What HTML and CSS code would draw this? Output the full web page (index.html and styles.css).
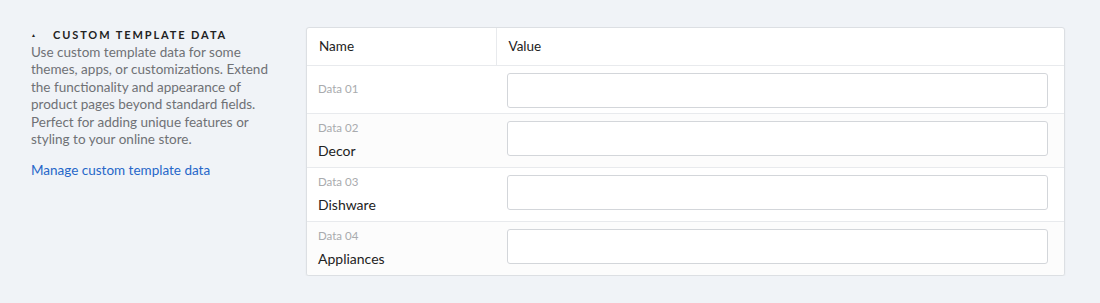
FILE: index.html
```html
<!DOCTYPE html>
<html lang="en">
<head>
    <meta charset="UTF-8">
    <title>Custom Template Data</title>
    <link rel="stylesheet" href="styles.css">
</head>
<body>
    <div class="section">
        <!-- Описание -->
        <div class="section-info">
            <h3 class="section-title"><span class="caret">&#9650;</span>Custom Template Data</h3>
            <p class="section-text">Use custom template data for some themes, apps, or customizations. Extend the functionality and appearance of product pages beyond standard fields. Perfect for adding unique features or styling to your online store.</p>
            <a href="#" class="section-link">Manage custom template data</a>
        </div>

        <!-- Таблица -->
        <div class="data-card">
            <table class="data-table">
                <thead>
                    <tr>
                        <th class="col-name">Name</th>
                        <th class="col-value">Value</th>
                    </tr>
                </thead>
                <tbody>
                    <tr>
                        <td class="cell-name"><span class="data-key">Data 01</span></td>
                        <td class="cell-value"><input type="text" class="data-input"></td>
                    </tr>
                    <tr class="alt">
                        <td class="cell-name"><span class="data-key">Data 02</span><span class="data-label">Decor</span></td>
                        <td class="cell-value"><input type="text" class="data-input"></td>
                    </tr>
                    <tr>
                        <td class="cell-name"><span class="data-key">Data 03</span><span class="data-label">Dishware</span></td>
                        <td class="cell-value"><input type="text" class="data-input"></td>
                    </tr>
                    <tr class="alt">
                        <td class="cell-name"><span class="data-key">Data 04</span><span class="data-label">Appliances</span></td>
                        <td class="cell-value"><input type="text" class="data-input"></td>
                    </tr>
                </tbody>
            </table>
        </div>
    </div>
</body>
</html>
```

FILE: styles.css
```css
/* Переменные */
:root {
    --bg-color: #f0f3f7;
    --card-bg: #ffffff;
    --alt-bg: #fcfcfc;
    --border-color: #dcdfe3;
    --line-color: #e8eaed;
    --text-color: #222222;
    --text-muted: #6f7175;
    --text-light: #a9abae;
    --link-color: #2667c9;
}

* {
    margin: 0;
    padding: 0;
    box-sizing: border-box;
}

body {
    font-family: 'Lato', 'Liberation Sans', sans-serif;
    background-color: var(--bg-color);
    color: var(--text-color);
    font-size: 13.5px;
}

.section {
    display: flex;
    align-items: flex-start;
    gap: 30px;
    padding: 27px 35px 0 31px;
}

/* Описание */
.section-info {
    width: 245px;
    flex-shrink: 0;
}

.section-title {
    font-size: 11px;
    font-weight: 700;
    letter-spacing: 1.9px;
    text-transform: uppercase;
    line-height: 15px;
    color: var(--text-color);
}

.caret {
    display: inline-block;
    font-size: 5px;
    vertical-align: middle;
    margin-right: 17px;
    letter-spacing: 0;
    position: relative;
    top: -1px;
}

.section-text {
    font-size: 13.5px;
    line-height: 17.5px;
    color: var(--text-muted);
    margin-bottom: 13px;
}

.section-link {
    color: var(--link-color);
    text-decoration: none;
    line-height: 17px;
}

.section-link:hover {
    text-decoration: underline;
}

/* Таблица */
.data-card {
    flex: 1;
    background-color: var(--card-bg);
    border: 1px solid var(--border-color);
    border-radius: 3px;
    box-shadow: 0 1px 2px rgba(0, 0, 0, 0.06);
    overflow: hidden;
}

.data-table {
    width: 100%;
    border-collapse: collapse;
}

.data-table th {
    text-align: left;
    font-weight: 400;
    font-size: 13.5px;
    height: 37px;
    padding: 0 12px;
    border-bottom: 1px solid var(--line-color);
}

.col-name {
    width: 189px;
    border-right: 1px solid var(--line-color);
}

.data-table tbody tr {
    border-bottom: 1px solid var(--line-color);
}

.data-table tbody tr:last-child {
    border-bottom: none;
}

.data-table tr.alt {
    background-color: var(--alt-bg);
}

.cell-name {
    padding: 6px 12px 6px 11px;
    vertical-align: middle;
}

.data-key {
    display: block;
    font-size: 11.5px;
    line-height: 16px;
    color: var(--text-light);
}

.data-label {
    display: block;
    font-size: 14px;
    line-height: 20px;
    margin-top: 5px;
    color: var(--text-color);
}

.cell-value {
    padding: 6px 16px 5px 11px;
    vertical-align: top;
}

.data-input {
    display: block;
    width: 100%;
    height: 35px;
    margin-top: 1px;
    border: 1px solid #d3d6da;
    border-radius: 3px;
    background-color: #ffffff;
    font-family: inherit;
    font-size: 13px;
    padding: 0 10px;
}

.data-input:focus {
    outline: none;
    border-color: var(--link-color);
}
```
